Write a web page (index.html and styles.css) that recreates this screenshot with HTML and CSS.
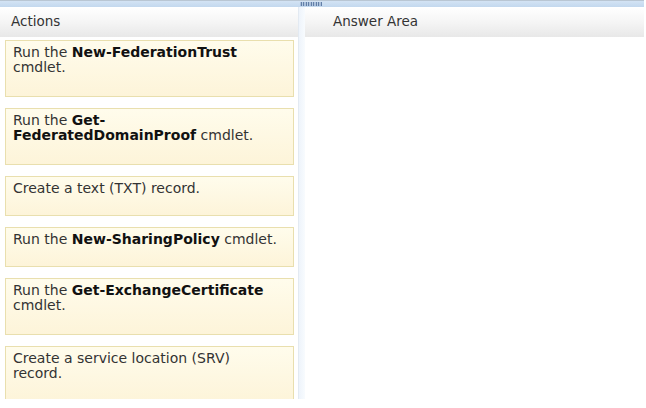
FILE: index.html
```html
<!DOCTYPE html>
<html lang="en">
<head>
    <meta charset="UTF-8">
    <title>Actions / Answer Area</title>
    <link rel="stylesheet" href="styles.css">
</head>
<body>
<div class="topbar">
    <div class="grip"></div>
</div>
<div class="panels">
    <div class="panel left">
        <div class="panelhead">Actions</div>
        <div class="list">
            <div class="item tall">Run the <b>New-FederationTrust</b><br>cmdlet.</div>
            <div class="item tall">Run the <b>Get-<br>FederatedDomainProof</b> cmdlet.</div>
            <div class="item">Create a text (TXT) record.</div>
            <div class="item">Run the <b>New-SharingPolicy</b> cmdlet.</div>
            <div class="item tall">Run the <b>Get-ExchangeCertificate</b><br>cmdlet.</div>
            <div class="item tall">Create a service location (SRV)<br>record.</div>
        </div>
    </div>
    <div class="splitter"></div>
    <div class="panel right">
        <div class="panelhead answer">Answer Area</div>
    </div>
</div>
</body>
</html>
```

FILE: styles.css
```css
html, body {
    margin: 0;
    padding: 0;
    background: #ffffff;
}
body {
    width: 646px;
    height: 408px;
    overflow: hidden;
    font-family: "DejaVu Sans", Verdana, sans-serif;
    font-size: 14px;
    color: #333333;
}
.topbar {
    height: 6px;
    width: 644px;
    border-top: 1px solid #b9c6d3;
    background: linear-gradient(#d3e3f4, #c3d8ee);
    position: relative;
}
.grip {
    position: absolute;
    left: 300px;
    top: 1px;
    width: 22px;
    height: 4px;
    background-image: radial-gradient(circle, #3f5f8f 0.8px, transparent 1px);
    background-size: 2.5px 2px;
}
.panels {
    display: flex;
    width: 644px;
    height: 392px;
}
.panel {
    display: flex;
    flex-direction: column;
    overflow: hidden;
}
.left {
    width: 298px;
}
.right {
    flex: 1;
}
.splitter {
    width: 6px;
    border-left: 1px solid #e3eaf2;
    background: linear-gradient(90deg, #eef4fb, #f8fbfe);
}
.panelhead {
    flex-shrink: 0;
    height: 30px;
    line-height: 29px;
    padding-left: 11px;
    font-size: 13.5px;
    color: #333333;
    background: linear-gradient(#ffffff, #f5f5f5 50%, #e8e8e8);
}
.answer {
    padding-left: 28px;
}
.list {
    display: flex;
    flex-direction: column;
    gap: 11px;
    padding: 3px 4px 0 5px;
}
.item {
    flex-shrink: 0;
    white-space: nowrap;
    border: 1px solid #e9dfae;
    background: linear-gradient(#fffcec, #fdf4d9);
    padding: 4px 8px 19px 7px;
    line-height: 15px;
    color: #333333;
}
.item.tall {
    padding-bottom: 21px;
}
.item b {
    color: #111111;
}
```
